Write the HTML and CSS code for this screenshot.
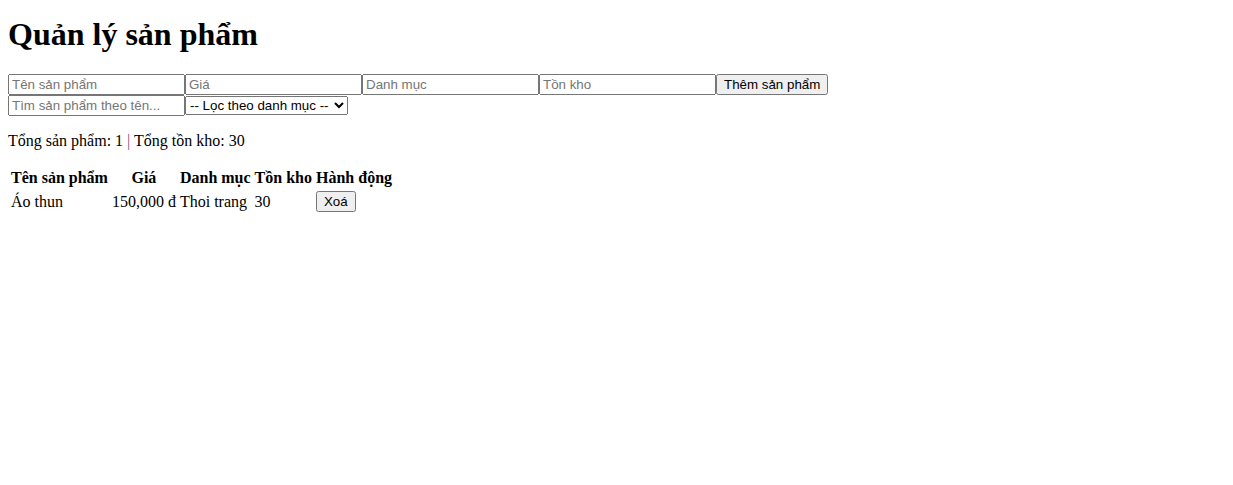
FILE: index.html
```html
<!DOCTYPE html>
<html lang="vi">
<head>
<meta charset="utf-8">
<title>Quản lý sản phẩm</title>
<link rel="stylesheet" href="styles.css">
</head>
<body>
<h1 class="title">Quản lý sản phẩm</h1>
<div class="form-row">
<input class="field" type="text" placeholder="Tên sản phẩm"><input class="field" type="text" placeholder="Giá"><input class="field" type="text" placeholder="Danh mục"><input class="field" type="text" placeholder="Tồn kho"><button class="btn">Thêm sản phẩm</button>
</div>
<div class="filter-row">
<input class="field" type="text" placeholder="Tìm sản phẩm theo tên..."><select class="filter"><option>-- Lọc theo danh mục --</option><option>Thoi trang</option></select>
</div>
<p class="summary">Tổng sản phẩm: 1 <span class="sep">|</span> Tổng tồn kho: 30</p>
<table class="products">
<thead>
<tr><th>Tên sản phẩm</th><th>Giá</th><th>Danh mục</th><th>Tồn kho</th><th>Hành động</th></tr>
</thead>
<tbody>
<tr><td>Áo thun</td><td>150,000 đ</td><td>Thoi trang</td><td>30</td><td><button class="btn">Xoá</button></td></tr>
</tbody>
</table>
</body>
</html>
```
FILE: styles.css
```css
body {
  font-family: "Liberation Serif", "Times New Roman", serif;
}
.title {
  margin-top: 8px;
}
.field, .filter, .btn {
  font-family: "Liberation Sans", Arial, sans-serif;
  font-size: 13.333px;
}
.field {
  width: 169px;
}
.field::placeholder {
  color: #757575;
}
.filter {
  width: 163px;
}
.sep {
  color: #7a4a7a;
}
```
